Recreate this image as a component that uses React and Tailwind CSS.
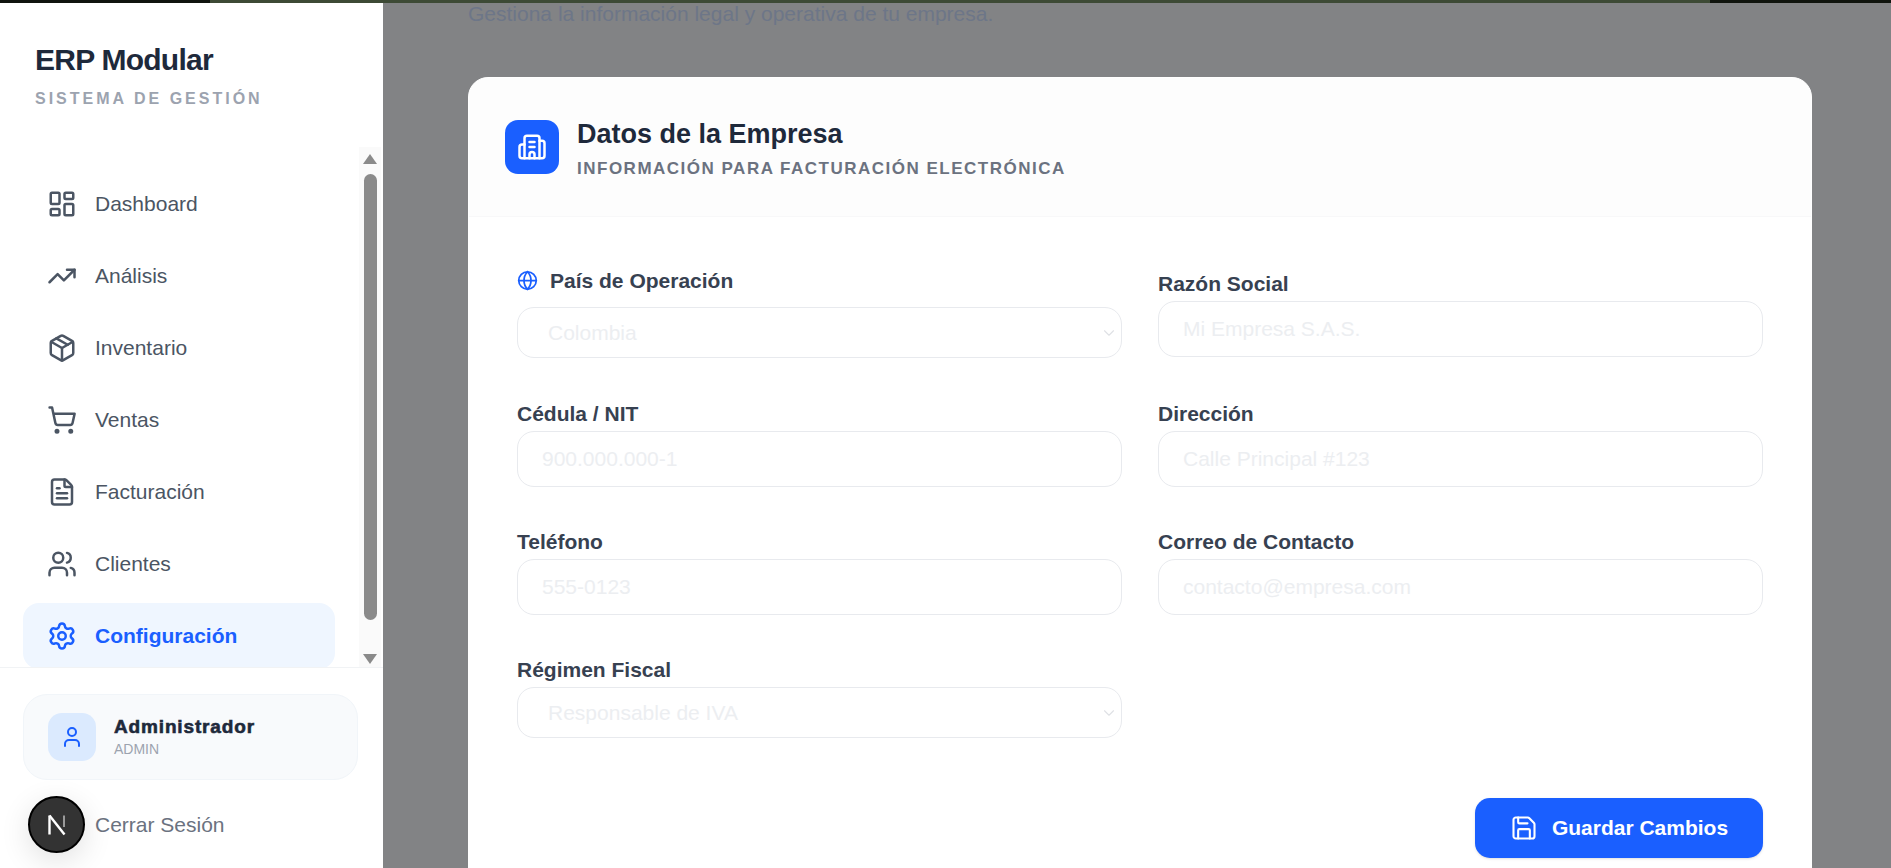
import React from 'react';
import {
  LayoutDashboard,
  TrendingUp,
  Package,
  ShoppingCart,
  FileText,
  Users,
  Settings,
  User,
  Building2,
  Globe,
  Save,
  ChevronDown,
} from 'lucide-react';

const navItems = [
  { label: 'Dashboard', icon: LayoutDashboard },
  { label: 'Análisis', icon: TrendingUp },
  { label: 'Inventario', icon: Package },
  { label: 'Ventas', icon: ShoppingCart },
  { label: 'Facturación', icon: FileText },
  { label: 'Clientes', icon: Users },
  { label: 'Configuración', icon: Settings, active: true },
];

function TextField({ label, placeholder, className = '' }) {
  return (
    <div className={`flex flex-col ${className}`}>
      <label className="h-[23px] mb-[6px] text-[21px] leading-[23px] font-bold text-[#374151]">{label}</label>
      <input
        placeholder={placeholder}
        className="h-[56px] px-[24px] rounded-[17px] border border-[#e8eaee] bg-white text-[21px] outline-none placeholder:text-[#eceef1]"
      />
    </div>
  );
}

function SelectField({ label, value, globe, className = '' }) {
  return (
    <div className={`flex flex-col ${className}`}>
      <label className={`flex items-center gap-[12px] h-[23px] text-[21px] leading-[23px] font-bold text-[#374151] ${globe ? 'mb-[15px]' : 'mb-[6px]'}`}>
        {globe && <Globe size={21} className="text-[#1a5fff]" />}
        {label}
      </label>
      <div className="relative">
        <select
          defaultValue={value}
          className="w-full h-[51px] pl-[30px] rounded-[17px] border border-[#e8eaee] bg-white text-[21px] text-[#eceef1] outline-none appearance-none"
        >
          <option>{value}</option>
        </select>
        <ChevronDown size={18} strokeWidth={1.5} className="absolute right-[4px] top-[17px] text-[#dfe1e5]" />
      </div>
    </div>
  );
}

function Sidebar() {
  return (
    <aside className="relative flex flex-col w-[383px] shrink-0 bg-white">
      <div className="h-[144px] shrink-0 pl-[35px] pt-[39px]">
        <h1 className="text-[30px] leading-[36px] font-bold text-[#1e293b] tracking-[-0.75px]">ERP Modular</h1>
        <p className="mt-[11px] text-[16px] leading-[20px] font-bold tracking-[3px] text-[#9ca3af]">SISTEMA DE GESTIÓN</p>
      </div>

      <div className="flex h-[521px] shrink-0 pr-[2px] border-b border-[#f1f3f5]">
        <nav className="flex-1 flex flex-col gap-[6px] pl-[23px] pr-[24px] pt-[24px] overflow-hidden">
          {navItems.map(({ label, icon: Icon, active }) => (
            <a
              key={label}
              className={`flex items-center gap-[18px] h-[66px] shrink-0 pl-[24px] rounded-[16px] text-[21px] ${
                active ? 'bg-[#eff6ff] text-[#1a5fff] font-bold' : 'text-[#4b5563]'
              }`}
            >
              <Icon size={30} strokeWidth={2} />
              {label}
            </a>
          ))}
        </nav>
        {/* scrollbar */}
        <div className="flex flex-col items-center w-[22px] shrink-0 bg-[#fafafa] pt-[7px]">
          <div className="w-0 h-0 border-x-[7.5px] border-x-transparent border-b-[10px] border-b-[#8a8a8a]" />
          <div className="w-[13px] h-[446px] mt-[10px] rounded-full bg-[#8a8a8a]" />
          <div className="w-0 h-0 mt-[34px] border-x-[7.5px] border-x-transparent border-t-[10px] border-t-[#8a8a8a]" />
        </div>
      </div>

      <div className="flex-1 pl-[23px] pr-[25px] pt-[26px]">
        <div className="flex items-center gap-[18px] h-[86px] pl-[24px] pb-[2px] rounded-[24px] border border-[#f1f5f9] bg-[#f8fafc]">
          <div className="flex items-center justify-center w-[48px] h-[48px] mt-[2px] rounded-[14px] bg-[#dbeafe] text-[#1a5fff]">
            <User size={24} />
          </div>
          <div>
            <p className="text-[19px] leading-[24px] font-bold tracking-[0.85px] text-[#1e293b] [-webkit-text-stroke:0.6px_#1e293b]">Administrador</p>
            <p className="mt-[1px] text-[14px] leading-[18px] font-medium text-[#9ca3af]">ADMIN</p>
          </div>
        </div>
        <p className="mt-[31px] pl-[72px] text-[21px] leading-[28px] text-[#6b7280]">Cerrar Sesión</p>
      </div>

      {/* dev indicator */}
      <div className="absolute left-[28px] top-[793px] flex items-center justify-center w-[57px] h-[57px] rounded-full bg-[#333] border-2 border-black shadow-[0_8px_30px_rgba(0,0,0,0.12)]">
        <svg width="20" height="22" viewBox="0 0 20 22" fill="none">
          <path d="M2.5 1.5V20.5" stroke="white" strokeWidth="2.4" />
          <path d="M2.5 1.5L17.5 20.5" stroke="white" strokeWidth="2.4" />
          <path d="M17 1.5V13" stroke="#9a9a9a" strokeWidth="2" />
        </svg>
      </div>
    </aside>
  );
}

export default function App() {
  return (
    <div className="h-screen overflow-hidden flex flex-col font-['Liberation_Sans',Arial,sans-serif]">
      <div className="flex h-[3px] shrink-0 bg-[#3d4a35]">
        <div className="w-[210px] bg-[#10140e]" />
        <div className="flex-1" />
        <div className="w-[181px] bg-[#10140e]" />
      </div>
      <div className="flex flex-1 min-h-0">
        <Sidebar />
        <main className="flex-1 min-w-0 bg-[#828385] pl-[85px] pr-[79px]">
          <p className="text-[21px] leading-[22px] text-[#6d7688]">Gestiona la información legal y operativa de tu empresa.</p>
          <div className="mt-[52px] rounded-[20px] border border-white bg-white pb-[48px]">
            <div className="flex items-center gap-[18px] h-[139px] px-[36px] rounded-t-[20px] bg-[#fdfdfd] border-b border-[#f8f8f9]">
              <div className="flex items-center justify-center w-[54px] h-[54px] rounded-[13px] bg-[#1a5fff] text-white">
                <Building2 size={30} />
              </div>
              <div className="pt-[2px]">
                <h2 className="text-[27px] leading-[32px] font-bold text-[#1e293b]">Datos de la Empresa</h2>
                <p className="mt-[9px] text-[17px] leading-[20px] font-bold tracking-[1.5px] text-[#6b7280]">INFORMACIÓN PARA FACTURACIÓN ELECTRÓNICA</p>
              </div>
            </div>
            <div className="px-[48px] pt-[52px]">
              <div className="grid grid-cols-2 gap-x-[36px] gap-y-[43px] items-start">
                <SelectField label="País de Operación" value="Colombia" globe className="pb-[1px]" />
                <TextField label="Razón Social" placeholder="Mi Empresa S.A.S." className="mt-[3px]" />
                <TextField label="Cédula / NIT" placeholder="900.000.000-1" />
                <TextField label="Dirección" placeholder="Calle Principal #123" />
                <TextField label="Teléfono" placeholder="555-0123" />
                <TextField label="Correo de Contacto" placeholder="contacto@empresa.com" />
                <SelectField label="Régimen Fiscal" value="Responsable de IVA" />
              </div>
              <div className="flex justify-end mt-[60px]">
                <button className="flex items-center justify-center gap-[14px] w-[288px] h-[60px] rounded-[15px] bg-[#1a5fff] text-white text-[21px] font-bold shadow-sm">
                  <Save size={28} strokeWidth={1.8} />
                  Guardar Cambios
                </button>
              </div>
            </div>
          </div>
        </main>
      </div>
    </div>
  );
}
